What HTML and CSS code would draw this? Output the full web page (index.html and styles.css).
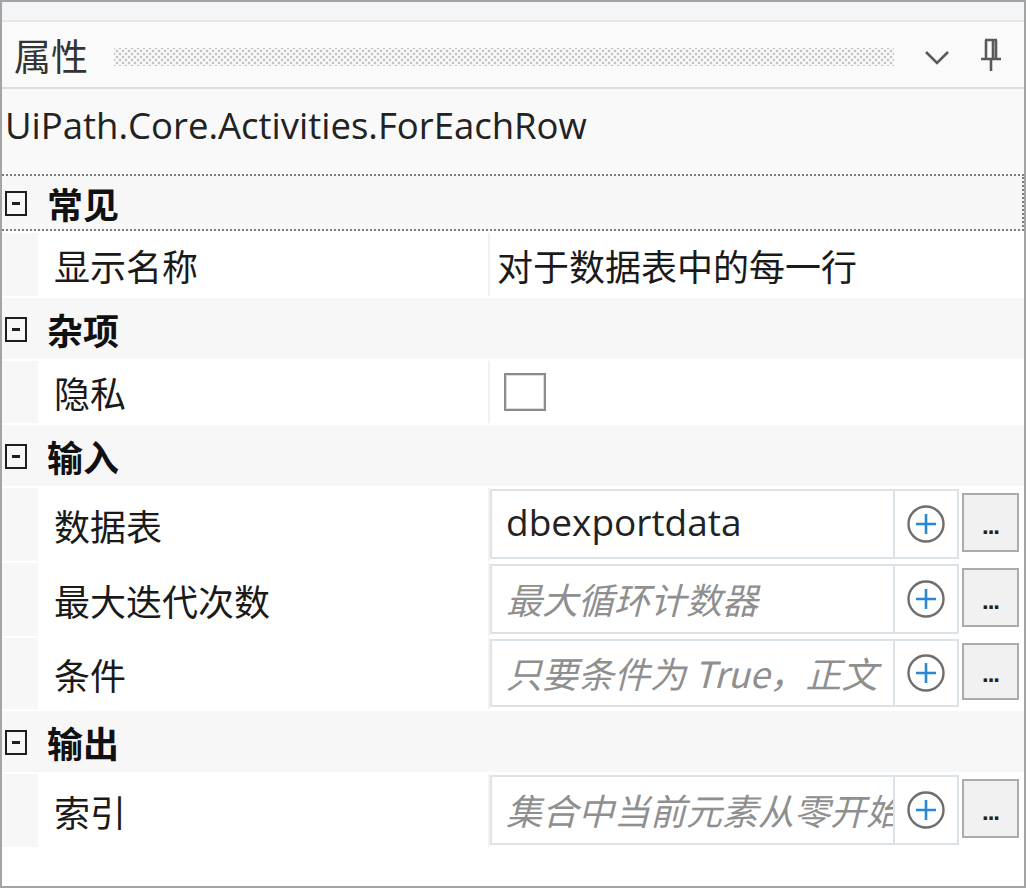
FILE: index.html
```html
<!DOCTYPE html>
<html lang="zh-CN">
<head>
<meta charset="utf-8">
<link rel="stylesheet" href="styles.css">
</head>
<body>
<div class="panel">
  <div class="topstrip"></div>
  <div class="titlebar">
    <span class="title">属性</span>
    <div class="grip"></div>
    <svg class="chev" width="26" height="18" viewBox="0 0 26 18"><polyline points="2,3 13,14 24,3" fill="none" stroke="#5a5a5a" stroke-width="2.6"/></svg>
    <svg class="pin" width="26" height="36" viewBox="0 0 26 36"><path d="M7 3 H19 M8 3 V22 M18 3 V22 M15 4 V22 M3 22 H23 M13 22 V34" fill="none" stroke="#5a5a5a" stroke-width="2.6"/></svg>
  </div>
  <div class="typename">UiPath.Core.Activities.ForEachRow</div>

  <div class="category focused"><span class="toggle"></span><span class="catname">常见</span></div>
  <div class="prop">
    <div class="gutter"></div>
    <div class="label">显示名称</div>
    <div class="value"><span class="plain">对于数据表中的每一行</span></div>
  </div>

  <div class="category"><span class="toggle"></span><span class="catname">杂项</span></div>
  <div class="prop short">
    <div class="gutter"></div>
    <div class="label">隐私</div>
    <div class="value"><span class="checkbox"></span></div>
  </div>

  <div class="category"><span class="toggle"></span><span class="catname">输入</span></div>
  <div class="prop tall">
    <div class="gutter"></div>
    <div class="label">数据表</div>
    <div class="value editor">
      <div class="field"><span class="text">dbexportdata</span></div>
      <div class="plus"><svg width="40" height="40" viewBox="0 0 40 40"><circle cx="20" cy="20" r="17.5" fill="none" stroke="#6e6e6e" stroke-width="2.4"/><path d="M20 10 V30 M10 20 H30" stroke="#2b86d6" stroke-width="2.6"/></svg></div>
      <div class="dots">...</div>
    </div>
  </div>
  <div class="prop tall">
    <div class="gutter"></div>
    <div class="label">最大迭代次数</div>
    <div class="value editor">
      <div class="field"><span class="hint">最大循环计数器</span></div>
      <div class="plus"><svg width="40" height="40" viewBox="0 0 40 40"><circle cx="20" cy="20" r="17.5" fill="none" stroke="#6e6e6e" stroke-width="2.4"/><path d="M20 10 V30 M10 20 H30" stroke="#2b86d6" stroke-width="2.6"/></svg></div>
      <div class="dots">...</div>
    </div>
  </div>
  <div class="prop mid">
    <div class="gutter"></div>
    <div class="label">条件</div>
    <div class="value editor">
      <div class="field"><span class="hint">只要条件为 True，正文</span></div>
      <div class="plus"><svg width="40" height="40" viewBox="0 0 40 40"><circle cx="20" cy="20" r="17.5" fill="none" stroke="#6e6e6e" stroke-width="2.4"/><path d="M20 10 V30 M10 20 H30" stroke="#2b86d6" stroke-width="2.6"/></svg></div>
      <div class="dots">...</div>
    </div>
  </div>

  <div class="category"><span class="toggle"></span><span class="catname">输出</span></div>
  <div class="prop tall">
    <div class="gutter"></div>
    <div class="label">索引</div>
    <div class="value editor">
      <div class="field"><span class="hint">集合中当前元素从零开始</span></div>
      <div class="plus"><svg width="40" height="40" viewBox="0 0 40 40"><circle cx="20" cy="20" r="17.5" fill="none" stroke="#6e6e6e" stroke-width="2.4"/><path d="M20 10 V30 M10 20 H30" stroke="#2b86d6" stroke-width="2.6"/></svg></div>
      <div class="dots">...</div>
    </div>
  </div>
  <div class="rest"></div>
</div>
</body>
</html>
```
FILE: styles.css
```css
html, body {
  margin: 0;
  padding: 0;
  background: #ffffff;
}
.panel {
  width: 1026px;
  height: 888px;
  box-sizing: border-box;
  border: 2px solid #a4a4a4;
  background: #ffffff;
  display: flex;
  flex-direction: column;
  overflow: hidden;
  font-family: "Open Sans", "Noto Sans CJK SC", sans-serif;
  font-size: 36px;
  color: #1e1e1e;
}
.topstrip {
  height: 18px;
  flex: none;
  background: #f3f5f6;
  border-bottom: 2px solid #e2e7eb;
}
.titlebar {
  height: 65px;
  flex: none;
  display: flex;
  align-items: center;
  background: #fafafa;
  border-bottom: 2px solid #dedede;
  padding: 0 0 0 12px;
}
.title {
  font-family: "Noto Sans CJK SC", sans-serif;
  font-size: 37px;
  color: #333;
  line-height: 40px;
}
.grip {
  flex: 1;
  height: 18px;
  margin: 4px 30px 0 26px;
  background-image:
    radial-gradient(circle, #c4c4c4 1.1px, transparent 1.7px),
    radial-gradient(circle, #c4c4c4 1.1px, transparent 1.7px);
  background-size: 6px 6px, 6px 6px;
  background-position: 0 0, 3px 3px;
}
.chev {
  flex: none;
  margin: 6px 28px 0 0;
}
.pin {
  flex: none;
  margin: 0 20px 0 0;
}
.typename {
  height: 84px;
  flex: none;
  box-sizing: border-box;
  padding: 10px 0 0 3px;
  line-height: 52px;
  background: #f9f9f9;
  color: #222;
  font-size: 36.5px;
}
.category {
  flex: none;
  height: 61px;
  display: flex;
  align-items: center;
  background: #f7f7f7;
  box-sizing: border-box;
  margin-top: 2px;
}
.category.focused {
  height: 57px;
  border-top: 2px dotted #7c7c7c;
  border-bottom: 2px dotted #7c7c7c;
  border-right: 2px dotted #7c7c7c;
  margin-top: 1px;
}
.toggle {
  width: 18px;
  height: 21px;
  border: 2.5px solid #1e1e1e;
  margin: 2px 20px 0 3px;
  position: relative;
  flex: none;
}
.toggle::after {
  content: "";
  position: absolute;
  left: 5px;
  right: 5px;
  top: 9px;
  height: 3px;
  background: #1e1e1e;
}
.catname {
  font-family: "Noto Sans CJK SC", sans-serif;
  font-weight: 700;
  font-size: 36px;
  line-height: 40px;
  color: #111;
}
.prop {
  flex: none;
  height: 63px;
  display: flex;
  margin-top: 2px;
  background: #f2f2f2;
}
.prop.short {
  height: 62px;
}
.prop.tall {
  height: 73px;
}
.prop.mid {
  height: 71px;
}
.gutter {
  width: 36px;
  flex: none;
  background: #f7f7f7;
}
.label {
  width: 450px;
  flex: none;
  background: #ffffff;
  margin-right: 2px;
  display: flex;
  align-items: center;
  padding-left: 16px;
  box-sizing: border-box;
  font-family: "Noto Sans CJK SC", sans-serif;
  font-size: 36px;
  color: #1a1a1a;
}
.value {
  flex: 1;
  background: #ffffff;
  display: flex;
  align-items: center;
  min-width: 0;
}
.plain {
  font-family: "Noto Sans CJK SC", sans-serif;
  font-size: 36px;
  padding-left: 7px;
  color: #1a1a1a;
}
.checkbox {
  width: 38px;
  height: 34px;
  border: 2px solid #8c8c8c;
  box-shadow: inset 0 0 0 1px #dcdcdc;
  margin: 0 0 0 14px;
  background: #fff;
}
.editor {
  align-items: stretch;
  padding: 1px 3px 2px 0;
}
.field {
  flex: none;
  width: 403px;
  box-sizing: border-box;
  border: 2px solid #dbe2e8;
  border-right: none;
  display: flex;
  align-items: center;
  padding-left: 14px;
  overflow: hidden;
  white-space: nowrap;
}
.text {
  font-size: 37px;
  color: #222;
  padding-bottom: 6px;
}
.hint {
  font-family: "Noto Sans CJK SC", sans-serif;
  font-style: italic;
  font-size: 36px;
  color: #8f8f8f;
  padding-bottom: 2px;
}
.plus {
  flex: none;
  width: 66px;
  box-sizing: border-box;
  border: 2px solid #dbe2e8;
  display: flex;
  align-items: center;
  justify-content: center;
}
.dots {
  flex: none;
  width: 57px;
  margin: 4px 0 7px 3px;
  box-sizing: border-box;
  border: 2px solid #ababab;
  background: #f1f1f1;
  font-family: "Liberation Sans", sans-serif;
  font-weight: 700;
  font-size: 24px;
  line-height: 1;
  color: #222;
  display: flex;
  align-items: flex-end;
  justify-content: center;
  padding-bottom: 12px;
  letter-spacing: -1px;
}
.rest {
  flex: 1;
  background: #ffffff;
}
```
